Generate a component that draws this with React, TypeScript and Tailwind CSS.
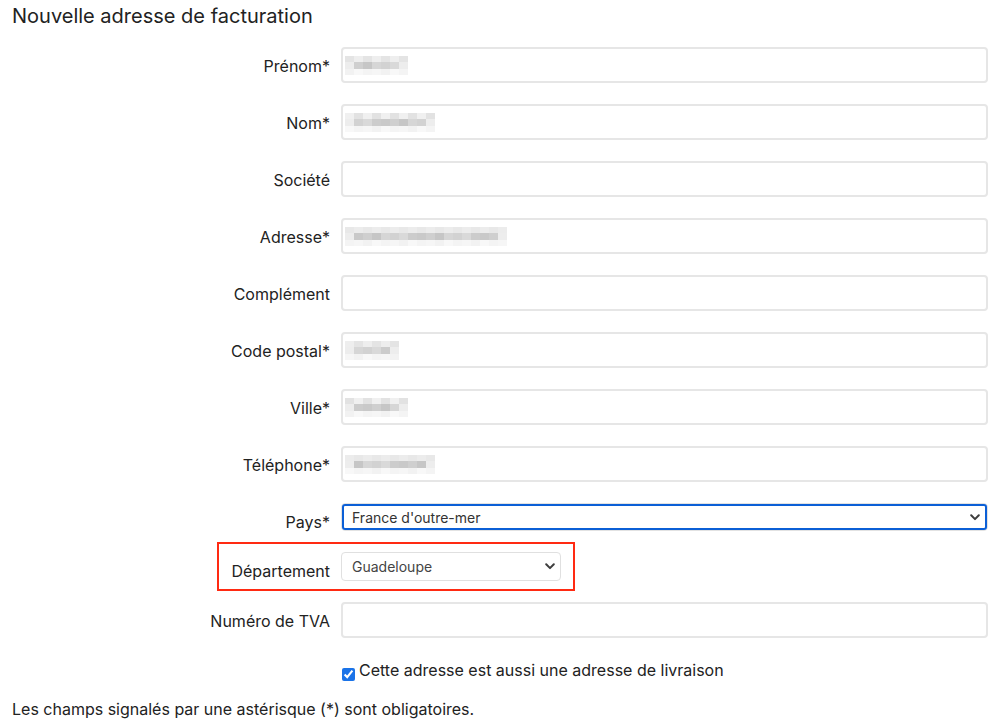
import React from "react";

const shadesTop = ["bg-[#ececec]", "bg-[#e4e4e4]", "bg-[#f0f0f0]", "bg-[#e8e8e8]", "bg-[#eeeeee]", "bg-[#e2e2e2]"];
const shadesMid = ["bg-[#d2d2d2]", "bg-[#c9c9c9]", "bg-[#d6d6d6]", "bg-[#cccccc]", "bg-[#c6c6c6]", "bg-[#d9d9d9]", "bg-[#cfcfcf]"];
const shadesBot = ["bg-[#f6f6f6]", "bg-[#f2f2f2]", "bg-[#f8f8f8]", "bg-[#f4f4f4]"];

// pixelated placeholder for hidden personal data
const Blurred = ({ cells, seed }: { cells: number; seed: number }) => {
    const idx = Array.from({ length: cells }, (_, i) => i);
    return (
        <div className="ml-[2px] flex flex-col">
            <div className="flex">
                {idx.map((i) => (
                    <div key={i} className={`h-[6px] w-[9px] ${shadesTop[(i * 3 + seed) % shadesTop.length]}`} />
                ))}
            </div>
            <div className="flex">
                {idx.map((i) => (
                    <div
                        key={i}
                        className={`h-[7px] w-[9px] ${
                            i === 0 || i === cells - 1 ? "bg-[#ededed]" : shadesMid[(i * 5 + seed) % shadesMid.length]
                        }`}
                    />
                ))}
            </div>
            <div className="flex">
                {idx.map((i) => (
                    <div key={i} className={`h-[6px] w-[9px] ${shadesBot[(i + seed) % shadesBot.length]}`} />
                ))}
            </div>
        </div>
    );
};

const Chevron = () => (
    <svg width="10" height="7" viewBox="0 0 10 7" className="shrink-0">
        <path d="M1.2 1.3 L5 5.1 L8.8 1.3" fill="none" stroke="#3d3d3d" strokeWidth="2" strokeLinecap="round" strokeLinejoin="round" />
    </svg>
);

const Field = ({ label, blur, seed = 0 }: { label: string; blur?: number; seed?: number }) => (
    <div className="mb-[21px] flex">
        <label className="w-[329px] shrink-0 pr-[11px] pt-[7px] text-right leading-6">{label}</label>
        <div className="mr-[3px] flex h-[36px] flex-1 items-center rounded-[4px] border-2 border-[#e6e6e6] bg-white">
            {blur ? <Blurred cells={blur} seed={seed} /> : null}
        </div>
    </div>
);

const App = () => {
    return (
        <div
            className="min-h-[728px] bg-white px-3 text-[16px] text-[#222]"
            style={{ fontFamily: "Inter, 'Noto Sans', sans-serif" }}
        >
            <h2 className="pt-[2px] text-[20px] leading-[28px] text-[#222]">Nouvelle adresse de facturation</h2>

            <div className="mt-[17px]">
                <Field label="Prénom*" blur={7} seed={1} />
                <Field label="Nom*" blur={10} seed={2} />
                <Field label="Société" />
                <Field label="Adresse*" blur={18} seed={3} />
                <Field label="Complément" />
                <Field label="Code postal*" blur={6} seed={4} />
                <Field label="Ville*" blur={7} seed={5} />
                <Field label="Téléphone*" blur={10} seed={6} />

                <div className="flex h-[28px]">
                    <label className="w-[329px] shrink-0 pr-[11px] pt-[7px] text-right leading-6">Pays*</label>
                    <div className="mr-[3px] h-[28px] flex-1 rounded-[4px] border border-[#e2e2e2]">
                        <div className="flex h-full items-center justify-between rounded-[3px] border-2 border-[#0b5fd6] pl-[8px] pr-[5px] text-[14px] text-[#333]">
                            <span>France d'outre-mer</span>
                            <Chevron />
                        </div>
                    </div>
                </div>

                <div className="mt-[11px] ml-[205px] flex w-[358px] border-2 border-[#ff2a12] pt-[8px] pb-[6px] pr-[12px]">
                    <label className="w-[122px] shrink-0 pr-[11px] pt-[7px] text-right leading-6">Département</label>
                    <div className="flex h-[29px] w-[220px] items-center justify-between rounded-[4px] border border-[#e0e0e0] bg-white pl-[10px] pr-[5px] text-[14px] text-[#444]">
                        <span>Guadeloupe</span>
                        <Chevron />
                    </div>
                </div>

                <div className="mt-[11px] flex">
                    <label className="w-[329px] shrink-0 pr-[11px] pt-[7px] text-right leading-6">Numéro de TVA</label>
                    <div className="mr-[3px] h-[36px] flex-1 rounded-[4px] border-2 border-[#e6e6e6] bg-white" />
                </div>

                <div className="mt-[20px] flex items-start pl-[330px] leading-6">
                    <input
                        type="checkbox"
                        checked
                        readOnly
                        className="mt-[10px] h-[13px] w-[13px] shrink-0 accent-[#1a73e8]"
                    />
                    <span className="ml-[4px]">Cette adresse est aussi une adresse de livraison</span>
                </div>

                <p className="mt-[15px] leading-6">Les champs signalés par une astérisque (*) sont obligatoires.</p>
            </div>
        </div>
    );
};

export default App;
